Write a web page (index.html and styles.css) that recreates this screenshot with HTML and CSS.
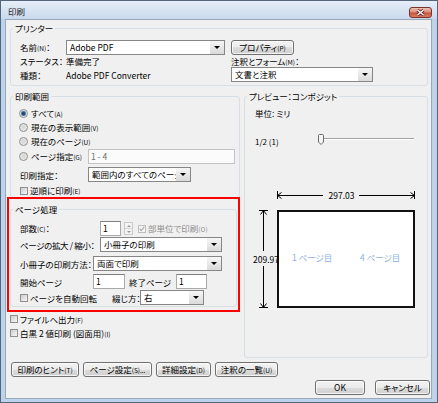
FILE: index.html
```html
<!DOCTYPE html>
<html lang="ja">
<head>
<meta charset="utf-8">
<title>印刷</title>
<link rel="stylesheet" href="styles.css">
</head>
<body>
<div class="window">
  <div class="titlebar">
    <span class="title">印刷</span>
    <span class="close"><svg width="9" height="7" viewBox="0 0 9 7"><path d="M1.5 1l6 5M7.5 1l-6 5" stroke="#5b2018" stroke-width="3" fill="none"/><path d="M1.5 1l6 5M7.5 1l-6 5" stroke="#fff" stroke-width="1.5" fill="none"/></svg></span>
  </div>
  <div class="client">
    <fieldset class="group printer">
      <legend>プリンター</legend>
      <div class="printer-body">
        <span class="lbl">名前<span class="ac">(N)</span>：</span>
        <div class="select sel-printer"><span class="val">Adobe PDF</span><span class="arrow"></span></div>
        <button class="btn btn-prop">プロパティ<span class="ac">(P)</span></button>
        <span class="lbl">ステータス：</span>
        <span class="lbl">準備完了</span>
        <span class="lbl">注釈とフォーム<span class="ac">(M)</span>：</span>
        <span class="lbl">種類：</span>
        <span class="lbl">Adobe PDF Converter</span>
        <div class="select sel-annot"><span class="val">文書と注釈</span><span class="arrow"></span></div>
      </div>
    </fieldset>

    <div class="middle">
      <div class="left-col">
        <fieldset class="group range">
          <legend>印刷範囲</legend>
          <div class="range-body">
            <div class="rrow"><span class="radio on"></span><span class="lbl">すべて<span class="ac">(A)</span></span></div>
            <div class="rrow"><span class="radio"></span><span class="lbl">現在の表示範囲<span class="ac">(V)</span></span></div>
            <div class="rrow"><span class="radio"></span><span class="lbl">現在のページ<span class="ac">(U)</span></span></div>
            <div class="rrow r-pages">
              <span class="opt"><span class="radio"></span><span class="lbl">ページ指定<span class="ac">(G)</span></span></span>
              <div class="input disabled in-range">1 - 4</div>
            </div>
            <div class="rrow r-subset">
              <span class="lbl lbl-subset">印刷指定：</span>
              <div class="select sel-subset"><span class="val">範囲内のすべてのページ</span><span class="arrow"></span></div>
            </div>
            <div class="rrow r-reverse"><span class="cb"></span><span class="lbl">逆順に印刷<span class="ac">(E)</span></span></div>
          </div>
        </fieldset>

        <div class="highlight">
          <fieldset class="group pages">
            <legend>ページ処理</legend>
            <div class="pages-body">
              <div class="prow copies">
                <span class="lbl w80">部数<span class="ac">(C)</span>：</span>
                <div class="input in-copies">1</div>
                <span class="spin"><span class="up"></span><span class="down"></span></span>
                <span class="cb checked dis"><svg width="6" height="6" viewBox="0 0 6 6"><path d="M0.8 3l1.5 1.6L5.2 0.9" stroke="#a9a9a9" stroke-width="1.2" fill="none"/></svg></span>
                <span class="lbl grey">部単位で印刷<span class="ac">(O)</span></span>
              </div>
              <div class="prow scale">
                <span class="lbl w80 tight">ページの拡大 / 縮小：</span>
                <div class="select sel-scale"><span class="val">小冊子の印刷</span><span class="arrow"></span></div>
              </div>
              <div class="prow booklet">
                <span class="lbl w73">小冊子の印刷方法：</span>
                <div class="select sel-booklet"><span class="val">両面で印刷</span><span class="arrow"></span></div>
              </div>
              <div class="prow sheets">
                <span class="lbl w73">開始ページ</span>
                <div class="input in-start">1</div>
                <span class="lbl lbl-end">終了ページ</span>
                <div class="input in-end">1</div>
              </div>
              <div class="prow rotate">
                <span class="opt opt-rotate"><span class="cb"></span><span class="lbl">ページを自動回転</span></span>
                <span class="lbl lbl-bind">綴じ方：</span>
                <div class="select sel-bind"><span class="val">右</span><span class="arrow"></span></div>
              </div>
            </div>
          </fieldset>
        </div>

        <div class="orow"><span class="cb"></span><span class="lbl">ファイルへ出力<span class="ac">(F)</span></span></div>
        <div class="orow"><span class="cb"></span><span class="lbl">白黒 2 値印刷 (図面用)<span class="ac">(I)</span></span></div>
      </div>

      <fieldset class="group preview">
        <legend>プレビュー：コンポジット</legend>
        <div class="preview-body">
          <div class="unit">単位: ミリ</div>
          <div class="zoomrow">
            <span class="zoomlbl">1/2 (1)</span>
            <svg class="thumb" width="6" height="11" viewBox="0 0 6 11"><path d="M1.5 0.5h3a1 1 0 0 1 1 1v6.5l-2.5 2.5l-2.5-2.5v-6.5a1 1 0 0 1 1-1z" fill="#f4f4f4" stroke="#6b6b6b"/></svg>
            <span class="track"></span>
          </div>
          <svg class="diagram" width="165" height="126" viewBox="0 0 165 126">
            <path d="M24.5 5v8M24.5 9.5H70M106 9.5H161.5M161.5 5v8M24.5 9.5l4-3M24.5 9.5l4 3M161.5 9.5l-4-3M161.5 9.5l-4 3" stroke="#000" stroke-width="1" fill="none"/>
            <path d="M6 24.5h9M10.5 24.5V65M10.5 80V121.5M6 121.5h9M10.5 24.5l-3 4M10.5 24.5l3 4M10.5 121.5l-3-4M10.5 121.5l3-4" stroke="#000" stroke-width="1" fill="none"/>
            <rect x="25" y="25" width="136" height="96" fill="#fff" stroke="#111" stroke-width="2"/>
            <text class="dimtext" x="88.5" y="12.5" text-anchor="middle">297.03</text>
            <text class="dimtext" x="0" y="76.5">209.97</text>
            <text class="pg" x="39" y="74.5">1 ページ目</text>
            <text class="pg" x="107" y="74.5">4 ページ目</text>
          </svg>
        </div>
      </fieldset>
    </div>

    <div class="actions">
      <button class="btn b-hint">印刷のヒント<span class="ac">(T)</span></button>
      <button class="btn b-setup">ページ設定<span class="ac">(S)...</span></button>
      <button class="btn b-adv">詳細設定<span class="ac">(D)</span></button>
      <button class="btn b-list">注釈の一覧<span class="ac">(U)</span></button>
    </div>
    <div class="confirm">
      <button class="btn b-ok">OK</button>
      <button class="btn b-cancel">キャンセル</button>
    </div>
  </div>
</div>
</body>
</html>
```

FILE: styles.css
```css
* { box-sizing: border-box; }
html, body { margin: 0; padding: 0; background: #bdd3ec; }
body {
  width: 438px;
  height: 403px;
  overflow: hidden;
  font-family: "Noto Sans CJK JP", "Liberation Sans", sans-serif;
  font-size: 8.5px;
  line-height: 12px;
  color: #000;
  font-feature-settings: "palt" 1;
}

/* window frame */
.window {
  width: 438px;
  height: 403px;
  border: 1px solid #55667a;
  background: #bdd3ec;
  display: flex;
  flex-direction: column;
}
.titlebar {
  flex: none;
  height: 18px;
  display: flex;
  align-items: flex-start;
  justify-content: space-between;
  padding: 0 5px 0 7px;
  background: linear-gradient(#e6eef8, #c9d9ec);
}
.title { margin-top: 4px; color: #1a1a1a; }
.close {
  width: 23px;
  height: 11px;
  margin-top: 6px;
  border: 1px solid #7b3226;
  border-radius: 3px;
  background: linear-gradient(#edc0b2 0%, #da8e7c 45%, #c9553f 55%, #d77a62 100%);
  display: flex;
  align-items: center;
  justify-content: center;
}
.client {
  flex: 1;
  margin: 0 5px 3px 4px;
  border: 1px solid #98a9bc;
  background: #f0f0f0;
  display: flex;
  flex-direction: column;
}

/* group boxes */
.group {
  margin: 0;
  padding: 0;
  min-width: 0;
  border: 1px solid #d5dfe5;
  border-radius: 3px;
}
.group > legend {
  padding: 0 2px;
  margin-left: 2px;
  line-height: 12px;
}

/* common controls */
.lbl { white-space: nowrap; }
.tight { letter-spacing: -0.35px; }
.ac { font-size: 6.5px; }
.grey { color: #8d8d8d; }
.select {
  flex: none;
  display: flex;
  height: 15px;
  border: 1px solid #868686;
  background: #fff;
}
.select .val {
  flex: 1;
  min-width: 0;
  overflow: hidden;
  white-space: nowrap;
  padding-left: 3px;
  line-height: 13px;
}
.select .arrow {
  flex: none;
  width: 14px;
  background: linear-gradient(#f6f6f6, #dadada);
  display: flex;
  align-items: center;
  justify-content: center;
}
.select .arrow::before {
  content: "";
  border-left: 3px solid transparent;
  border-right: 3px solid transparent;
  border-top: 3px solid #000;
}
.input {
  flex: none;
  height: 15px;
  border: 1px solid #a9a9a9;
  border-top-color: #7f7f7f;
  background: #fff;
  padding-left: 2px;
  line-height: 13px;
}
.input.disabled { color: #6d6d6d; background: #fbfbfb; border-color: #c3c3c3; }
.btn {
  font: inherit;
  color: #000;
  margin: 0;
  padding: 0;
  flex: none;
  height: 15px;
  line-height: 13px;
  border: 1px solid #707070;
  border-radius: 3px;
  background: linear-gradient(#f3f3f3 0%, #ebebeb 50%, #dcdcdc 50%, #cfcfcf 100%);
  box-shadow: inset 0 0 0 1px rgba(255, 255, 255, 0.75);
  white-space: nowrap;
  text-align: center;
}
.radio {
  flex: none;
  width: 9px;
  height: 9px;
  border-radius: 50%;
  border: 1px solid #8e8f8f;
  background: radial-gradient(circle at 50% 45%, #d6d6d6 0, #dedede 40%, #f6f6f6 100%);
}
.radio.on {
  background: radial-gradient(circle, #1d3f66 0, #2c5787 1.6px, #8fa8c4 2.6px, #f2f2f2 3.2px, #dcdcdc 100%);
}
.cb {
  flex: none;
  width: 8px;
  height: 8px;
  border: 1px solid #8f8f8f;
  background: linear-gradient(135deg, #cdcdcd, #f7f7f7);
  display: flex;
  align-items: center;
  justify-content: center;
}
.cb.dis { border-color: #bdbdbd; background: #f6f6f6; }

/* printer group */
.printer { margin: 2px 3px 0 4px; }
.printer-body {
  padding: 6px 0 3px 9px;
  display: grid;
  grid-template-columns: 46px 165px 142px;
  grid-template-rows: 15px 12px 15px;
  align-items: center;
}
.sel-printer { width: 159px; }
.btn-prop { width: 63px; }
.sel-annot { width: 142px; }

/* middle */
.middle {
  flex: none;
  display: flex;
  gap: 4px;
  margin: 4px 3px 0 4px;
}
.left-col {
  flex: none;
  width: 230px;
  display: flex;
  flex-direction: column;
}

/* print range */
.range-body {
  padding: 4px 0 0 8px;
  display: flex;
  flex-direction: column;
}
.rrow {
  display: flex;
  align-items: center;
  gap: 3px;
  height: 14px;
}
.opt { display: flex; align-items: center; gap: 3px; }
.r-pages { height: 15px; margin-top: 1px; gap: 0; }
.r-pages .opt { width: 69px; }
.in-range { width: 147px; }
.r-subset { height: 15px; margin-top: 3px; gap: 0; }
.lbl-subset { width: 69px; padding-left: 1px; }
.sel-subset { width: 103px; }
.r-reverse { height: 13px; margin-top: 2px; gap: 2px; padding-left: 1px; }

/* red highlight */
.highlight {
  margin: -1px 0 0 -3px;
  width: 233px;
  border: 2px solid #f00;
}
.pages { margin: 4px 1px 3px 1px; }
.pages-body {
  padding: 6px 0 1px 9px;
  display: flex;
  flex-direction: column;
}
.prow {
  display: flex;
  align-items: center;
  height: 15px;
}
.scale { margin-top: 1px; }
.booklet { margin-top: 4px; }
.sheets { margin-top: 3px; }
.rotate { margin-top: 1px; }
.w80 { flex: none; width: 80px; }
.w73 { flex: none; width: 73px; }
.in-copies { width: 21px; }
.spin {
  flex: none;
  width: 9px;
  height: 13px;
  margin-left: 3px;
  border: 1px solid #c9c9c9;
  background: #f3f3f3;
  display: flex;
  flex-direction: column;
}
.spin .up, .spin .down {
  flex: 1;
  display: flex;
  align-items: center;
  justify-content: center;
}
.spin .down { border-top: 1px solid #d6d6d6; }
.spin .up::before {
  content: "";
  border-left: 2px solid transparent;
  border-right: 2px solid transparent;
  border-bottom: 2px solid #9a9a9a;
}
.spin .down::before {
  content: "";
  border-left: 2px solid transparent;
  border-right: 2px solid transparent;
  border-top: 2px solid #9a9a9a;
}
.copies .cb { margin-left: 5px; margin-right: 2px; }
.sel-scale { width: 122px; }
.sel-booklet { width: 129px; }
.in-start { width: 32px; }
.lbl-end { flex: none; width: 51px; padding-left: 4px; }
.in-end { width: 31px; }
.opt-rotate { flex: none; width: 92px; gap: 2px; }
.lbl-bind { flex: none; width: 28px; }
.sel-bind { width: 64px; }

/* output options */
.orow {
  display: flex;
  align-items: center;
  gap: 2px;
  height: 14px;
}

/* preview */
.preview {
  flex: 1;
  height: 268px;
}
.preview-body {
  padding: 5px 0 0 10px;
  display: flex;
  flex-direction: column;
}
.unit { height: 13px; line-height: 13px; }
.zoomrow {
  margin-top: 14px;
  height: 12px;
  display: flex;
  align-items: flex-start;
}
.zoomlbl { flex: none; width: 63px; margin-top: 2px; font-size: 8px; }
.thumb { flex: none; display: block; }
.track {
  flex: none;
  width: 90px;
  height: 2px;
  margin-top: 4px;
  border-top: 1px solid #a3a3a3;
  border-bottom: 1px solid #ffffff;
}
.diagram {
  display: block;
  margin: 40px 0 0 -2px;
  overflow: visible;
}
.diagram text {
  font-family: "Noto Sans CJK JP", "Liberation Sans", sans-serif;
  font-size: 8.5px;
  font-feature-settings: "palt" 1;
}
.dimtext { fill: #000; }
.pg { fill: #8db0de; }

/* bottom buttons */
.actions {
  display: flex;
  gap: 4px;
  margin: 4px 0 0 5px;
}
.b-hint { width: 68px; }
.b-setup { width: 69px; }
.b-adv { width: 55px; }
.b-list { width: 63px; }
.confirm {
  display: flex;
  justify-content: flex-end;
  gap: 10px;
  margin: 3px 1px 0 0;
}
.b-ok { width: 50px; }
.b-cancel { width: 55px; }
```
